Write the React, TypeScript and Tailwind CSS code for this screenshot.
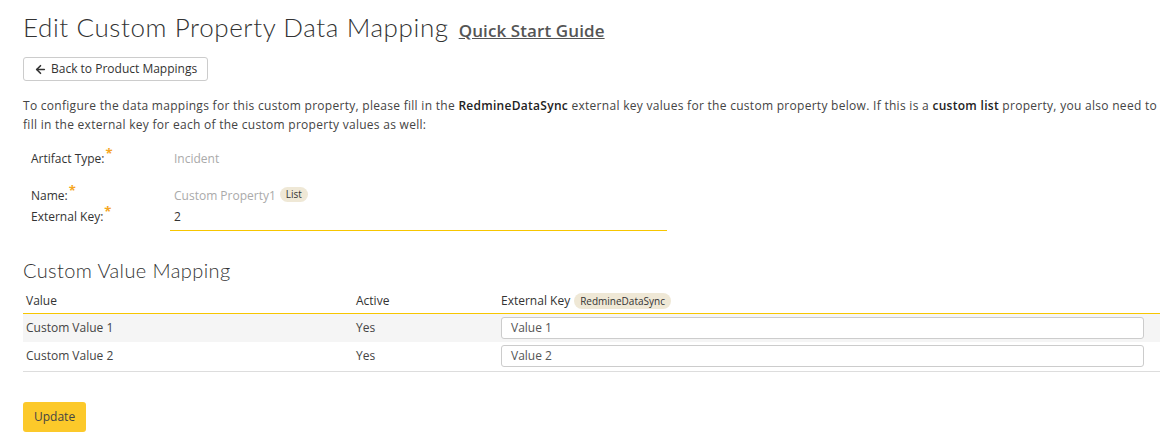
import { ArrowLeft } from "lucide-react";

const Star = () => <sup className="text-[#f5a623] text-[13px] font-bold top-[-0.35em] ml-[1px]">*</sup>;

const rows = [
  { value: "Custom Value 1", active: "Yes", key: "Value 1" },
  { value: "Custom Value 2", active: "Yes", key: "Value 2" },
];

export default function App() {
  return (
    <div className="bg-white w-[1169px] h-[446px] pl-[23px] pr-[9px] pt-[10px] text-[#333] text-[12px] font-['Open_Sans',sans-serif]">
      <div className="flex items-baseline gap-[10px]">
        <h1 className="font-['Lato',sans-serif] font-light text-[26px] leading-[34px] text-[#333] tracking-[0.6px]">
          Edit Custom Property Data Mapping
        </h1>
        <a className="text-[17px] font-semibold underline text-[#555] tracking-[0.1px]">Quick Start Guide</a>
      </div>

      <button className="mt-[13px] flex items-center gap-[4px] h-[24px] px-[10px] border border-[#ccc] rounded-[3px] text-[12px] text-[#333]">
        <ArrowLeft size={13} strokeWidth={3} />
        <span>Back to Product Mappings</span>
      </button>

      <p className="mt-[15px] mr-[3px] leading-[19px] text-justify text-[#444] tracking-[0.28px]">
        To configure the data mappings for this custom property, please fill in the <b className="font-semibold text-[#222]">RedmineDataSync</b> external key values for the custom property below. If this is a <b className="font-semibold text-[#222]">custom list</b> property, you also need to fill in the external key for each of the custom property values as well:
      </p>

      <div className="mt-[12px] pl-[8px]">
        <div className="flex items-center h-[26px]">
          <div className="w-[143px] text-[#333]">Artifact Type:<Star /></div>
          <div className="text-[#aaa]">Incident</div>
        </div>
        <div className="flex items-center h-[24px] mt-[12px]">
          <div className="w-[143px] text-[#333]">Name:<Star /></div>
          <div className="text-[#aaa] flex items-center gap-[4px]">
            Custom Property1
            <span className="bg-[#efe8d6] text-[#333] text-[10px] rounded-full px-[6px] leading-[15px] -mt-[4px]">List</span>
          </div>
        </div>
        <div className="flex items-start">
          <div className="w-[139px] text-[#333]">External Key:<Star /></div>
          <div className="w-[497px] border-b border-[#f7c600] pl-[4px] pb-[4px] text-[#333]">2</div>
        </div>
      </div>

      <h2 className="mt-[26px] font-['Lato',sans-serif] font-light text-[20px] leading-[26px] text-[#333] tracking-[0.4px]">Custom Value Mapping</h2>

      <table className="mt-[7px] w-full border-collapse">
        <thead>
          <tr className="border-b border-[#f7c600] h-[23px]">
            <th className="text-left font-normal pl-[3px] w-[333px]">Value</th>
            <th className="text-left font-normal w-[145px]">Active</th>
            <th className="text-left font-normal">
              <span className="inline-flex items-center gap-[4px]">
                External Key
                <span className="bg-[#efe8d6] text-[10px] rounded-full px-[6px] leading-[16px]">RedmineDataSync</span>
              </span>
            </th>
          </tr>
        </thead>
        <tbody>
          {rows.map((r, i) => (
            <tr key={r.value} className={`h-[29px] ${i === 0 ? "bg-[#f5f5f5]" : "border-b border-[#ddd]"}`}>
              <td className="pl-[3px] text-[#444]">{r.value}</td>
              <td className="text-[#444]">{r.active}</td>
              <td className="pr-[16px]">
                <div className="h-[22px] bg-white border border-[#ccc] rounded-[3px] px-[9px] flex items-center text-[#555]">{r.key}</div>
              </td>
            </tr>
          ))}
        </tbody>
      </table>

      <button className="mt-[30px] h-[30px] px-[11px] bg-[#fcc92a] rounded-[3px] text-[#444] text-[12px]">Update</button>
    </div>
  );
}
